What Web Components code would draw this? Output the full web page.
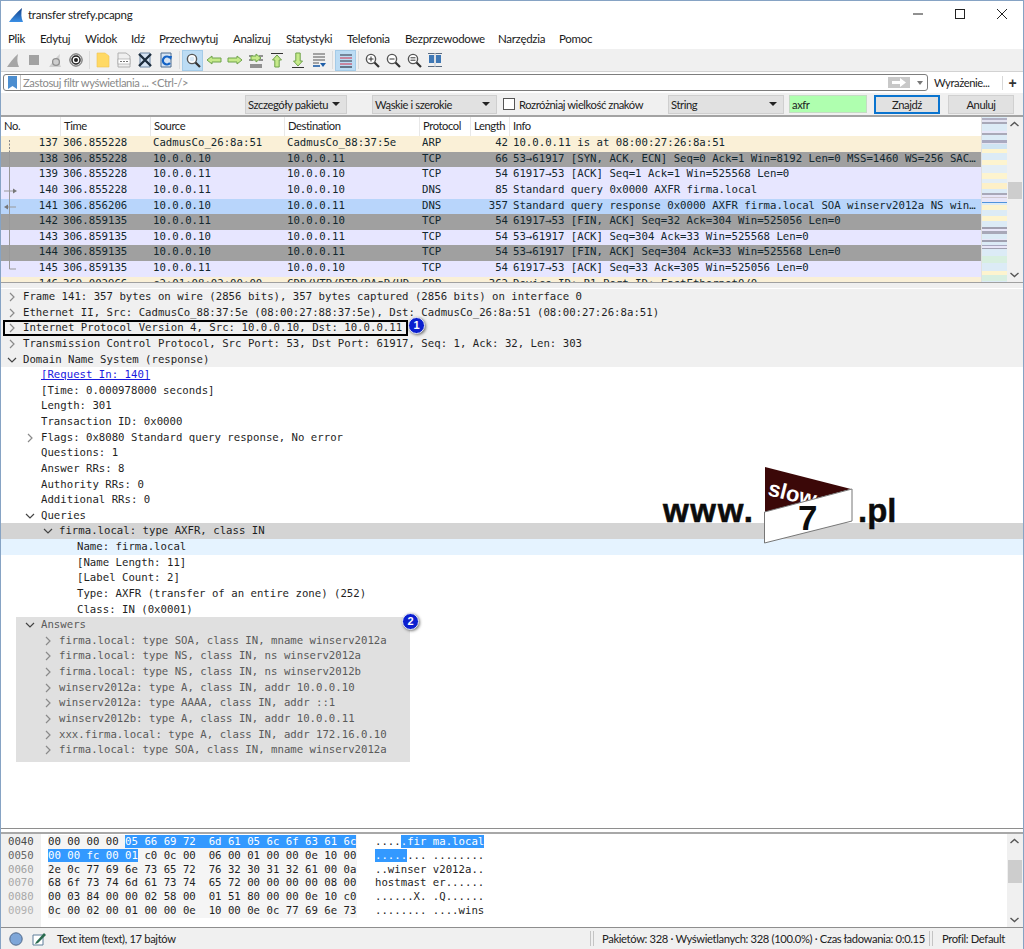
<!DOCTYPE html>
<html lang="pl">
<head>
<meta charset="utf-8">
<title>transfer strefy.pcapng</title>
<style>
  html, body { margin: 0; height: 949px; overflow: hidden; background: #fff; }
  body { font-family: Lato, sans-serif; font-size: 12px; color: #1a1a1a; }
</style>
</head>
<body>
<ws-window>
  <ws-titlebar slot="top">transfer strefy.pcapng</ws-titlebar>
  <ws-menubar slot="top"></ws-menubar>
  <ws-toolbar slot="top"></ws-toolbar>
  <ws-filterbar slot="top"></ws-filterbar>
  <ws-findbar slot="top"></ws-findbar>
  <ws-packets></ws-packets>
  <ws-tree></ws-tree>
  <ws-hex></ws-hex>
  <ws-status></ws-status>
  <ws-logo></ws-logo>
  <ws-badge n="1" style="left:407px;top:316px"></ws-badge>
  <ws-badge n="2" style="left:401px;top:612px"></ws-badge>
</ws-window>
<script>
(function(){
  const MONO = '"DejaVu Sans Mono", "Liberation Mono", monospace';
  const UI = 'Lato, "Open Sans", sans-serif';

  class WsWindow extends HTMLElement {
    connectedCallback() {
      this.attachShadow({mode: 'open'}).innerHTML = `
        <style>
        :host { display: flex; flex-direction: column; position: relative; box-sizing: border-box;
          width: 1024px; height: 949px; border: 1px solid #86a3c4; border-bottom: 0; background: #fff; overflow: hidden; }
        </style>
        <slot name="top"></slot><slot></slot>`;
    }
  }

  class WsTitlebar extends HTMLElement {
    connectedCallback() {
      this.attachShadow({mode: 'open'}).innerHTML = `
        <style>
        :host { display: flex; align-items: center; height: 28px; padding-left: 7px; font: 11.5px ${UI}; letter-spacing: -.25px; color: #222; flex: none; }
        .fin { width: 16px; height: 16px; margin-right: 4px; flex: none; }
        .txt { flex: 1; padding-bottom: 2px; }
        .btns { display: flex; margin-top: -2px; }
        .btns svg { width: 42px; height: 28px; display: block; }
        </style>
        <svg class="fin" viewBox="0 0 16 16"><defs><linearGradient id="f" x1="0" y1="0" x2="0" y2="1"><stop offset="0" stop-color="#123f86"/><stop offset="1" stop-color="#3a8fe6"/></linearGradient></defs><path d="M1 15C4 11 8 6 14 1C13 6 13 11 15 15Z" fill="url(#f)"/></svg>
        <span class="txt"><slot></slot></span>
        <span class="btns">
          <svg viewBox="0 0 42 28"><path d="M16 14H26" stroke="#222" stroke-width="1"/></svg>
          <svg viewBox="0 0 42 28"><rect x="16.5" y="9.5" width="9" height="9" fill="none" stroke="#222"/></svg>
          <svg viewBox="0 0 42 28"><path d="M16 9L26 19M26 9L16 19" stroke="#222" fill="none"/></svg>
        </span>`;
    }
  }

  class WsMenubar extends HTMLElement {
    connectedCallback() {
      const items = [['Plik',7],['Edytuj',39],['Widok',84],['Idź',130],['Przechwytuj',158],['Analizuj',232],['Statystyki',285],['Telefonia',346],['Bezprzewodowe',404],['Narzędzia',497],['Pomoc',558]];
      this.attachShadow({mode: 'open'}).innerHTML = `
        <style>
        :host { display: flex; align-items: center; height: 20px; padding-bottom: 1px; box-sizing: border-box; font: 11.5px ${UI}; letter-spacing: -.3px; color: #1a1a1a; flex: none; }
        span { flex: none; white-space: nowrap; }
        </style>` + items.map(i => `<span></span><span data-x="${i[1]}">${i[0]}</span>`).join('');
      // items sit at fixed distances from each other, so take the spacer from the real text width
      let left = 0;
      this.shadowRoot.querySelectorAll('span[data-x]').forEach(s => {
        const sp = s.previousElementSibling;
        sp.style.width = (+s.dataset.x - left) + 'px';
        left = +s.dataset.x + s.getBoundingClientRect().width;
      });
    }
  }

  const lens = c => `<circle cx="7" cy="7" r="4.6" fill="#fff" stroke="#555" stroke-width="1.4"/>${c}<path d="M10.5 10.5L15 15" stroke="#333" stroke-width="2.2"/>`;
  const garrow = d => `<path d="${d}" fill="#c6ea8a" stroke="#6ea34a"/>`;
  const ICONS = {
    shark: '<path d="M2 15C5 11 8 6 13 2C12 7 12 11 14 15Z" fill="#a6a6a6"/>',
    stop: '<rect x="3" y="3" width="10" height="10" fill="#a2a2a2"/>',
    restart: '<path d="M2 15C5 11 8 6 13 2C12 7 12 11 14 15Z" fill="#cfcfcf"/><circle cx="9" cy="10" r="3.4" fill="none" stroke="#8f8f8f" stroke-width="1.3"/>',
    options: '<circle cx="8" cy="8" r="6.2" fill="#d4d4d4" stroke="#666"/><circle cx="8" cy="8" r="4" fill="#fff" stroke="#222" stroke-width="1.4"/><circle cx="8" cy="8" r="2" fill="#222"/>',
    open: '<path d="M2 1H10L14 4V15H2Z" fill="#ffd964" stroke="#f0c550" stroke-width=".6"/>',
    save: '<path d="M2 1H10L14 4V15H2Z" fill="#efefef" stroke="#b0b0b0"/><rect x="2" y="7" width="12" height="5" fill="#fff" stroke="#999" stroke-width=".6"/><path d="M4 9.5H12" stroke="#777" stroke-dasharray="2 1"/>',
    close: '<path d="M3 1H13V15H3Z" fill="#d5e3f3" stroke="#6d86a3"/><path d="M2 2L14 14M14 2L2 14" stroke="#1c2c3c" stroke-width="2.4"/>',
    reload: '<path d="M3 1H13V15H3Z" fill="#d5e3f3" stroke="#4e6c8e"/><path d="M12 6A4 4 0 1 0 12 11" fill="none" stroke="#1463c6" stroke-width="2.2"/><path d="M10 4L14 4L13 8Z" fill="#1463c6"/>',
    find: lens('<circle cx="7" cy="7" r="2.4" fill="#d9e9f7"/>'),
    back: garrow('M1 8L6 4V6H15V10H6V12Z'),
    fwd: garrow('M15 8L10 4V6H1V10H10V12Z'),
    gotopkt: '<path d="M2 13H14M2 15H14" stroke="#333"/><path d="M1 4H5M1 8H5M11 4H15M11 8H15" stroke="#333"/>' + garrow('M13 6L8 2V4H3V8H8V10Z'),
    first: '<path d="M2 1.5H14" stroke="#333"/>' + garrow('M8 3L12.5 8H10.2V15H5.8V8H3.5Z'),
    last: '<path d="M2 15.5H14" stroke="#333"/>' + garrow('M8 14L12.5 9H10.2V1H5.8V9H3.5Z'),
    scroll: '<path d="M2 2H14M2 5H14M2 8H14" stroke="#555"/><path d="M2 11H8" stroke="#555"/><path d="M9 11H15L12 15Z" fill="#1f5ea8"/><path d="M2 14H9" stroke="#1f5ea8" stroke-width="1.6"/>',
    colorize: '<path d="M2 3H14M2 9H14" stroke="#2a3140" stroke-width="1.2"/><path d="M2 6H14M2 12H14" stroke="#d2304a" stroke-width="1.2"/><path d="M2 15H14" stroke="#2a3140" stroke-width="1.2"/>',
    zoomin: lens('<path d="M4.5 7H9.5M7 4.5V9.5" stroke="#333"/>'),
    zoomout: lens('<path d="M4.5 7H9.5" stroke="#333"/>'),
    zoom100: lens('<path d="M4.5 5.8H9.5M4.5 8.2H9.5" stroke="#333"/>'),
    resize: '<path d="M1 1.5H15M1 14.5H15" stroke="#5a6b80"/><rect x="2" y="3" width="5" height="8" fill="#3f78b5"/><rect x="9" y="3" width="5" height="8" fill="#3f78b5"/><path d="M8 1V15" stroke="#c5ccd6"/>'
  };

  class WsToolbar extends HTMLElement {
    connectedCallback() {
      const rows = [['shark'],['stop'],['restart'],['options'],'|',['open'],['save'],['close'],['reload'],'|',['find',1],['back'],['fwd'],['gotopkt'],['first'],['last'],['scroll'],'|',['colorize',1],'|',['zoomin'],['zoomout'],['zoom100'],['resize']];
      this.attachShadow({mode: 'open'}).innerHTML = `
        <style>
        :host { display: flex; align-items: center; height: 22px; padding-left: 1px; background: #f0f0f0; flex: none; border-bottom: 1px solid #d2d2d2; }
        i { display: flex; width: 21px; height: 21px; align-items: center; justify-content: center; flex: none; box-sizing: border-box; }
        i.on { background: #bcdcf4; border: 1px solid #a4cbe8; }
        svg { width: 16px; height: 16px; }
        b { width: 1px; height: 18px; margin: 0 2.5px; background: #dcdcdc; flex: none; }
        b:nth-of-type(4) { margin: 0 2px; }
        </style>` + rows.map(r => r === '|' ? '<b></b>' :
          `<i class="${r[1] ? 'on' : ''}"><svg viewBox="0 0 16 16">${ICONS[r[0]]}</svg></i>`).join('');
    }
  }

  class WsFilterbar extends HTMLElement {
    connectedCallback() {
      this.attachShadow({mode: 'open'}).innerHTML = `
        <style>
        :host { display: flex; align-items: center; height: 21px; padding: 0 0 0 2px; font: 11.2px ${UI}; letter-spacing: -.4px; flex: none; background: #fff; }
        .box { display: flex; align-items: center; width: 925px; height: 17px; box-sizing: border-box; border: 1px solid #7d7d7d; border-radius: 3px; color: #8a8a8a; }
        .mark { width: 16px; height: 15px; border-right: 1px solid #c8c8c8; flex: none; display: flex; justify-content: center; align-items: center; }
        .ph { flex: 1; padding-left: 2px; white-space: nowrap; }
        .go { width: 22px; height: 11px; background: #c8c8c8; display: flex; align-items: center; justify-content: center; flex: none; }
        .drop { width: 0; height: 0; border: 3px solid transparent; border-top: 4px solid #777; margin: 4px 4px 0 7px; flex: none; }
        .end { display: flex; align-items: center; margin-left: 6px; color: #222; white-space: nowrap; }
        .sep { width: 1px; height: 14px; background: #d8d8d8; margin: 0 5px 0 12px; flex: none; }
        .plus { font: bold 14px "Liberation Sans", sans-serif; color: #333; padding-left: 1px; }
        </style>
        <div class="box">
          <span class="mark"><svg width="9" height="13" viewBox="0 0 9 13"><path d="M0 0H9V13L4.5 10L0 13Z" fill="#4c8ed0"/></svg></span>
          <span class="ph">Zastosuj filtr wyświetlania ... &lt;Ctrl-/&gt;</span>
          <span class="go"><svg width="14" height="9" viewBox="0 0 14 9"><path d="M0 3H8V0L14 4.5L8 9V6H0Z" fill="#fff"/></svg></span>
          <span class="drop"></span>
        </div>
        <div class="end">Wyrażenie...<span class="sep"></span><span class="plus">+</span></div>`;
    }
  }

  class WsFindbar extends HTMLElement {
    connectedCallback() {
      const combo = (w, ml, t) => `<span class="combo" style="width:${w}px;margin-left:${ml}px">${t}<u></u></span>`;
      this.attachShadow({mode: 'open'}).innerHTML = `
        <style>
        :host { display: flex; align-items: center; height: 22px; background: #f0f0f0; font: 11.2px ${UI}; letter-spacing: -.42px; color: #222; flex: none; border-bottom: 2px solid #a3a3a3; box-sizing: content-box; }
        .combo { display: flex; align-items: center; justify-content: space-between; box-sizing: border-box; height: 19px; padding: 0 6px 0 2px; background: #e1e1e1; border: 1px solid #cfcfcf; white-space: nowrap; flex: none; }
        u { width: 0; height: 0; border: 4px solid transparent; border-top: 4px solid #222; border-bottom: 0; }
        .chk { width: 12px; height: 12px; box-sizing: border-box; border: 1px solid #555; background: #fff; margin: 0 4px 0 6px; flex: none; }
        .lbl { width: 149px; white-space: nowrap; flex: none; }
        .inp { width: 78px; height: 18px; box-sizing: border-box; margin-left: 5px; padding-left: 2px; background: #afffaf; border: 1px solid #c4dcc4; display: flex; align-items: center; flex: none; }
        .btn { width: 66px; height: 19px; box-sizing: border-box; display: flex; align-items: center; justify-content: center; background: #e1e1e1; border: 1px solid #d0d0d0; flex: none; }
        .btn.def { border: 2px solid #0a74cf; margin-left: 7px; }
        .btn.alt { margin-left: 8px; }
        </style>
        <span style="width:244px;flex:none"></span>
        ${combo(102, 0, 'Szczegóły pakietu')}
        ${combo(125, 25, 'Wąskie i szerokie')}
        <span class="chk"></span><span class="lbl">Rozróżniaj wielkość znaków</span>
        ${combo(116, 0, 'String')}
        <span class="inp">axfr</span>
        <span class="btn def">Znajdź</span><span class="btn alt">Anuluj</span>`;
    }
  }

  class WsScroll extends HTMLElement {
    connectedCallback() {
      const chev = d => `<svg width="15" height="15" viewBox="0 0 15 15"><path d="${d}" fill="none" stroke="#555" stroke-width="1.4"/></svg>`;
      this.attachShadow({mode: 'open'}).innerHTML = `
        <style>
        :host { display: flex; flex-direction: column; width: 16px; background: #f0f0f0; flex: none; position: relative; }
        .t { flex: 1; }
        .th { position: absolute; left: 1px; right: 1px; background: #cdcdcd; }
        svg { display: block; flex: none; }
        </style>
        ${chev('M3.5 9L7.5 5.5L11.5 9')}
        <div class="t"></div>
        <div class="th" style="top:${this.getAttribute('top')}px;height:${this.getAttribute('size')}px"></div>
        ${chev('M3.5 6L7.5 9.5L11.5 6')}`;
    }
  }

  // strips of the packet map next to the scrollbar
  const MAP = [['#b1b1c4',2],['#e4e4f2',2],['#a8a8b8',2],['#dcebf6',7],['#e8e6f8',2],['#a9a9b8',2],['#dcebf6',5],['#a9a9c0',3],['#e4e4f2',1],['#cfe4f2',5],['#fdf4cf',4],['#dcebf6',7],['#fdf4cf',5],['#e4eef5',8],['#fdf4cf',6],['#e4eef5',4],['#fdf0c8',6],['#dcebf6',4],['#a8a8b8',2],['#e8e6f8',2],['#cfc8d0',1],['#e8e6f8',4],['#4f93dc',1],['#dcebf6',2],['#fdf4cf',5],['#dcebf6',6],['#fdf4cf',5],['#dcebf6',6],['#a0a0b0',2],['#e8e6f8',2],['#a8a8b8',3],['#dcebf6',5],['#e8e6f8',1],['#a0a0b0',2],['#dcebf6',3],['#a8a8c0',1],['#e8e6f8',2],['#a0a0b0',1],['#dcebf6',7],['#d8efe0',7],['#dcebf6',8],['#fdf4cf',4],['#d8efe0',6],['#dcebf6',6],['#a8a8c0',2],['#e4e4f2',2],['#a8a8c0',2],['#e4e4f2',2],['#a0a0b0',1],['#dcebf6',8],['#a0a0b0',2]];

  const PKTS = [
    ['137','306.855228','CadmusCo_26:8a:51','CadmusCo_88:37:5e','ARP','42','10.0.0.11 is at 08:00:27:26:8a:51','arp','first'],
    ['138','306.855228','10.0.0.10','10.0.0.11','TCP','66','53→61917 [SYN, ACK, ECN] Seq=0 Ack=1 Win=8192 Len=0 MSS=1460 WS=256 SAC…','gray','line'],
    ['139','306.855228','10.0.0.11','10.0.0.10','TCP','54','61917→53 [ACK] Seq=1 Ack=1 Win=525568 Len=0','tcp','line'],
    ['140','306.855228','10.0.0.11','10.0.0.10','DNS','85','Standard query 0x0000 AXFR firma.local','tcp','req'],
    ['141','306.856206','10.0.0.10','10.0.0.11','DNS','357','Standard query response 0x0000 AXFR firma.local SOA winserv2012a NS win…','sel','resp'],
    ['142','306.859135','10.0.0.11','10.0.0.10','TCP','54','61917→53 [FIN, ACK] Seq=32 Ack=304 Win=525056 Len=0','gray','line'],
    ['143','306.859135','10.0.0.10','10.0.0.11','TCP','54','53→61917 [ACK] Seq=304 Ack=33 Win=525568 Len=0','tcp','line'],
    ['144','306.859135','10.0.0.10','10.0.0.11','TCP','54','53→61917 [FIN, ACK] Seq=304 Ack=33 Win=525568 Len=0','gray','line'],
    ['145','306.859135','10.0.0.11','10.0.0.10','TCP','54','61917→53 [ACK] Seq=33 Ack=305 Win=525056 Len=0','tcp','last'],
    ['146','369.002966','c2:01:08:02:00:00','CDP/VTP/DTP/PAgP/UD','CDP','362','Device ID: R1  Port ID: FastEthernet0/0','arp','']
  ];
  const REL = {
    first: '<path d="M8.5 4V16" stroke="#888" stroke-dasharray="2 1.5"/>',
    line: '<path d="M8.5 0V16" stroke="#999"/>',
    req: '<path d="M8.5 0V16M3 8H13" stroke="#999"/><path d="M12 5.5L16 8L12 10.5Z" fill="#777"/>',
    resp: '<path d="M8.5 0V16M6 8H15" stroke="#999"/><path d="M7 5.5L3 8L7 10.5Z" fill="#777"/>',
    last: '<path d="M8.5 0V8H15" fill="none" stroke="#999"/>'
  };

  class WsPackets extends HTMLElement {
    connectedCallback() {
      const head = ['No.','Time','Source','Destination','Protocol','Length','Info'];
      this.attachShadow({mode: 'open'}).innerHTML = `
        <style>
        :host { display: flex; height: 165px; flex: none; overflow: hidden; border-bottom: 1px solid #a0a0a0; }
        .main { flex: 1; min-width: 0; overflow: hidden; }
        .r { display: grid; grid-template-columns: 60px 90px 134px 135px 51px 39px 1fr; height: 15.625px; font: 10.68px/14.6px ${MONO}; color: #12272e; white-space: nowrap; }
        .r > span { padding-left: 2px; overflow: hidden; position: relative; }
        .r > .n { text-align: right; padding: 0 3px 0 0; }
        .r > .l { text-align: right; padding: 0 2px 0 0; }
        .r > .i { padding-left: 3px; }
        .r svg { position: absolute; left: 0; top: 0; width: 16px; height: 16px; }
        .arp { background: #faf0d7; }
        .gray { background: #a0a0a0; }
        .tcp { background: #e7e6ff; }
        .sel { background: #b8d5fb; }
        .h { display: grid; grid-template-columns: 60px 90px 134px 135px 51px 39px 1fr; height: 19px; font: 11.2px/17px ${UI}; letter-spacing: -.4px; color: #222; }
        .h span { padding-left: 3px; border-right: 1px solid #e8e8e8; white-space: nowrap; }
        .h span:last-child { border: 0; }
        .map { width: 25px; flex: none; padding-top: 1px; border-left: 1px solid #e0e0e0; background: #dcebf6; overflow: hidden; }
        .map i { display: block; }
        </style>
        <div class="main">
          <div class="h">${head.map(h => `<span>${h}</span>`).join('')}</div>
          ${PKTS.map(p => `<div class="r ${p[7]}">
            <span class="n">${p[8] ? `<svg viewBox="0 0 16 16">${REL[p[8]]}</svg>` : ''}${p[0]}</span><span>${p[1]}</span><span>${p[2]}</span><span>${p[3]}</span><span>${p[4]}</span><span class="l">${p[5]}</span><span class="i">${p[6]}</span>
          </div>`).join('')}
        </div>
        <div class="map">${MAP.map(m => `<i style="height:${m[1]}px;background:${m[0]}"></i>`).join('')}</div>
        <ws-scroll top="65" size="17"></ws-scroll>`;
    }
  }

  const TREE = [
    ['Frame 141: 357 bytes on wire (2856 bits), 357 bytes captured (2856 bits) on interface 0',0,'r','top'],
    ['Ethernet II, Src: CadmusCo_88:37:5e (08:00:27:88:37:5e), Dst: CadmusCo_26:8a:51 (08:00:27:26:8a:51)',0,'r','top'],
    ['Internet Protocol Version 4, Src: 10.0.0.10, Dst: 10.0.0.11',0,'r','top mark'],
    ['Transmission Control Protocol, Src Port: 53, Dst Port: 61917, Seq: 1, Ack: 32, Len: 303',0,'r','top'],
    ['Domain Name System (response)',0,'d','top'],
    ['<a>[Request In: 140]</a>',1],
    ['[Time: 0.000978000 seconds]',1],
    ['Length: 301',1],
    ['Transaction ID: 0x0000',1],
    ['Flags: 0x8080 Standard query response, No error',1,'r'],
    ['Questions: 1',1],
    ['Answer RRs: 8',1],
    ['Authority RRs: 0',1],
    ['Additional RRs: 0',1],
    ['Queries',1,'d'],
    ['firma.local: type AXFR, class IN',2,'d','cur'],
    ['Name: firma.local',3,'','hov'],
    ['[Name Length: 11]',3],
    ['[Label Count: 2]',3],
    ['Type: AXFR (transfer of an entire zone) (252)',3],
    ['Class: IN (0x0001)',3]
  ];
  const ANSWERS = [
    'firma.local: type SOA, class IN, mname winserv2012a',
    'firma.local: type NS, class IN, ns winserv2012a',
    'firma.local: type NS, class IN, ns winserv2012b',
    'winserv2012a: type A, class IN, addr 10.0.0.10',
    'winserv2012a: type AAAA, class IN, addr ::1',
    'winserv2012b: type A, class IN, addr 10.0.0.11',
    'xxx.firma.local: type A, class IN, addr 172.16.0.10',
    'firma.local: type SOA, class IN, mname winserv2012a'
  ];

  class WsTree extends HTMLElement {
    connectedCallback() {
      const arrow = a => {
        if (a === 'r') return '<svg viewBox="0 0 10 10"><path d="M3 1L7 5L3 9" fill="none" stroke="#8a8a8a" stroke-width="1.2"/></svg>';
        if (a === 'd') return '<svg viewBox="0 0 10 10"><path d="M1 3L5 7L9 3" fill="none" stroke="#444" stroke-width="1.2"/></svg>';
        return '';
      };
      const row = (t, lvl, a, cls, off) => `<div class="row ${cls || ''}" style="padding-left:${22 + lvl * 18 - (off || 0)}px"><span class="a">${arrow(a)}</span>${t}</div>`;
      this.attachShadow({mode: 'open'}).innerHTML = `
        <style>
        :host { display: block; flex: none; height: 546px; padding-top: 1px; border-top: 5px solid #efefef; border-bottom: 1px solid #8e8e8e; box-sizing: border-box; overflow: hidden; font: 10.68px/15.2px ${MONO}; color: #1f1f1f; }
        .row { position: relative; height: 15.625px; white-space: nowrap; }
        .a { position: absolute; width: 10px; height: 10px; top: 3px; margin-left: -16px; }
        .a svg { display: block; }
        .top { background: #f0f0f0; }
        .cur { background: #d4d4d4; }
        .hov { background: #e5f3ff; }
        a { color: #1a1ae0; text-decoration: underline; }
        .mark::after { content: ""; position: absolute; left: 2px; top: 0; width: 401px; height: 12px; border: 2px solid #000; }
        .ans { width: 394px; margin-left: 15px; padding-bottom: 4px; background: #e0e0e0; color: #5a5a5a; }
        </style>
        ${TREE.map(r => row(r[0], r[1], r[2], r[3])).join('')}
        <div class="ans">
          ${row('Answers', 1, 'd', '', 15)}
          ${ANSWERS.map(t => row(t, 2, 'r', '', 15)).join('')}
        </div>`;
    }
  }

  const HEX = [
    ['0040','#4a4a4a','00 00 00 00 ','05 66 69 72  6d 61 05 6c 6f 63 61 6c','','....','.fir ma.local',''],
    ['0050','#666','','00 00 fc 00 01',' c0 0c 00  06 00 01 00 00 0e 10 00','','.....','... ........'],
    ['0060','#a0a0a0','2e 0c 77 69 6e 73 65 72  76 32 30 31 32 61 00 0a','','','..winser v2012a..','',''],
    ['0070','#a8a8a8','68 6f 73 74 6d 61 73 74  65 72 00 00 00 00 08 00','','','hostmast er......','',''],
    ['0080','#a8a8a8','00 03 84 00 00 02 58 00  01 51 80 00 00 0e 10 c0','','','......X. .Q......','',''],
    ['0090','#b0b0b0','0c 00 02 00 01 00 00 0e  10 00 0e 0c 77 69 6e 73','','','........ ....wins','','']
  ];

  class WsHex extends HTMLElement {
    connectedCallback() {
      this.attachShadow({mode: 'open'}).innerHTML = `
        <style>
        :host { display: flex; flex: none; height: 96px; margin-top: 3px; border-top: 2px solid #a8a8a8; border-bottom: 1px solid #8e8e8e; box-sizing: border-box; font: 10.68px/13.8px ${MONO}; color: #1f1f1f; white-space: pre; }
        .off { width: 40px; flex: none; background: #f0f0f0; padding: 1px 0 0 7px; box-sizing: border-box; }
        .body { flex: 1; padding-top: 1px; }
        .l { height: 13.8px; display: flex; }
        .h { width: 309px; margin-left: 7px; background: #f5f5f5; flex: none; }
        .s { width: 109px; margin-left: 18px; flex: none; }
        mark { background: #3399ff; color: #fff; }
        </style>
        <div class="off">${HEX.map(r => `<div style="color:${r[1]}">${r[0]}</div>`).join('')}</div>
        <div class="body">${HEX.map(r => `<div class="l">
          <span class="h">${r[2]}${r[3] ? `<mark>${r[3]}</mark>` : ''}${r[4]}</span>
          <span class="s">${r[5]}${r[6] ? `<mark>${r[6]}</mark>` : ''}${r[7]}</span>
        </div>`).join('')}</div>
        <ws-scroll top="26" size="23"></ws-scroll>`;
    }
  }

  class WsStatus extends HTMLElement {
    connectedCallback() {
      this.attachShadow({mode: 'open'}).innerHTML = `
        <style>
        :host { display: flex; align-items: center; height: 21px; flex: none; background: #f0f0f0; font: 11.2px ${UI}; letter-spacing: -.35px; color: #222; white-space: nowrap; }
        .dot { width: 14px; height: 14px; margin-left: 8px; flex: none; }
        .note { width: 14px; height: 14px; margin: 0 11px 0 9px; flex: none; }
        .msg { flex: 1; }
        .grip { width: 4px; height: 15px; border-left: 1px solid #c4c4c4; border-right: 1px solid #c4c4c4; flex: none; box-sizing: border-box; }
        .pk { padding: 0 3px 0 8px; width: 335px; box-sizing: border-box; flex: none; }
        .pf { padding-left: 9px; width: 90px; flex: none; box-sizing: border-box; }
        </style>
        <svg class="dot" viewBox="0 0 14 14"><circle cx="7" cy="7" r="6.2" fill="#7ea6d8" stroke="#51698a"/></svg>
        <svg class="note" viewBox="0 0 14 14"><path d="M1 3H11V13H1Z" fill="#fff" stroke="#5f7f9a"/><path d="M4 10L12 1L14 3L6 11L3 12Z" fill="#2a6b4f"/></svg>
        <span class="msg">Text item (text), 17 bajtów</span>
        <span class="grip"></span>
        <span class="pk">Pakietów: 328 · Wyświetlanych: 328 (100.0%) · Czas ładowania: 0:0.15</span>
        <span class="grip"></span>
        <span class="pf">Profil: Default</span>`;
    }
  }

  class WsLogo extends HTMLElement {
    connectedCallback() {
      this.attachShadow({mode: 'open'}).innerHTML = `
        <style>
        :host { position: absolute; left: 660px; top: 463px; width: 240px; height: 84px; }
        svg { display: block; }
        text { font-family: "Liberation Sans", sans-serif; font-weight: bold; }
        </style>
        <svg width="240" height="84" viewBox="660 464 240 84">
          <text x="662" y="522" font-size="33" textLength="90" fill="#0c0c0c" stroke="#0c0c0c" stroke-width=".6">www.</text>
          <text x="857" y="522" font-size="33" fill="#0c0c0c" stroke="#0c0c0c" stroke-width=".4">.pl</text>
          <path d="M764 467L850 489L764 512Z" fill="#3b0808"/>
          <text font-size="22" fill="#fff" transform="translate(766 495) rotate(14)">slow</text>
          <path d="M763.5 512L851 489V521L763.5 543Z" fill="#fff" stroke="#777"/>
          <text x="797" y="530" font-size="35" fill="#0c0c0c">7</text>
        </svg>`;
    }
  }

  class WsBadge extends HTMLElement {
    connectedCallback() {
      this.attachShadow({mode: 'open'}).innerHTML = `
        <style>
        :host { position: absolute; width: 17px; height: 17px; box-sizing: border-box; border-radius: 50%; background: #0b1fcf; border: 1.5px solid #e8ecf8; box-shadow: 1px 1px 3px rgba(0,0,0,.55); color: #fff; font: bold 11px/14px "Liberation Sans", sans-serif; text-align: center; }
        </style>${this.getAttribute('n')}`;
    }
  }

  [['ws-window',WsWindow],['ws-titlebar',WsTitlebar],['ws-menubar',WsMenubar],['ws-toolbar',WsToolbar],['ws-filterbar',WsFilterbar],['ws-findbar',WsFindbar],['ws-scroll',WsScroll],['ws-packets',WsPackets],['ws-tree',WsTree],['ws-hex',WsHex],['ws-status',WsStatus],['ws-logo',WsLogo],['ws-badge',WsBadge]]
    .forEach(d => customElements.define(d[0], d[1]));
})();
</script>
</body>
</html>
